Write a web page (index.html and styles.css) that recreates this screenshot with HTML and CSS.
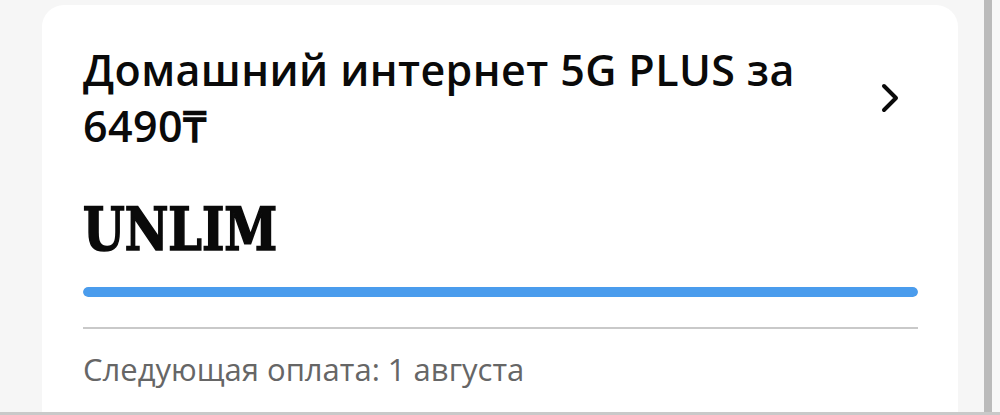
FILE: index.html
```html
<!DOCTYPE html>
<html lang="ru">
<head>
<meta charset="utf-8">
<link rel="stylesheet" href="styles.css">
</head>
<body>
<div class="screen">
  <div class="content">
    <section class="card">
      <div class="card-head">
        <h2 class="card-title">Домашний интернет 5G PLUS за 6490₸</h2>
        <svg class="chevron" width="18" height="30" viewBox="0 0 18 30">
          <path d="M3 3 L15 15 L3 27" fill="none" stroke="#0a0a0a" stroke-width="4" stroke-linecap="round" stroke-linejoin="round"/>
        </svg>
      </div>
      <div class="plan">UNLIM</div>
      <div class="bar"><div class="bar-fill" style="width:100%"></div></div>
      <div class="divider"></div>
      <div class="next-pay">Следующая оплата: 1 августа</div>
    </section>
  </div>
  <div class="scroll-track"></div>
  <div class="edge"></div>
</div>
</body>
</html>
```
FILE: styles.css
```css
* { box-sizing: border-box; }
html, body { margin: 0; padding: 0; }
body {
  width: 1000px;
  height: 415px;
  overflow: hidden;
  background: #f6f6f6;
  font-family: "Open Sans", "Liberation Sans", sans-serif;
}
.screen {
  display: flex;
  height: 415px;
  border-bottom: 3px solid #c9c9c9;
}
.content {
  width: 984px;
  padding: 5px 26px 0 42px;
}
.card {
  background: #fff;
  border-radius: 22px 22px 0 0;
  height: 100%;
  padding: 37px 40px 0 41px;
}
.card-head {
  display: flex;
  align-items: center;
  justify-content: space-between;
}
.card-title {
  margin: 0;
  width: 760px;
  font-size: 43px;
  line-height: 56px;
  font-weight: 600;
  color: #0a0a0a;
  letter-spacing: 0.4px;
}
.chevron {
  margin-right: 19px;
}
.plan {
  margin-top: 44px;
  font-family: "DejaVu Serif", serif;
  font-stretch: condensed;
  font-weight: 700;
  font-size: 59px;
  line-height: 64px;
  letter-spacing: 0;
  color: #0a0a0a;
  -webkit-text-stroke: 1.6px #0a0a0a;
  transform: scaleX(0.9);
  transform-origin: left center;
}
.bar {
  margin-top: 25px;
  height: 10px;
  border-radius: 5px;
  background: #e6e6e6;
  overflow: hidden;
}
.bar-fill {
  height: 100%;
  border-radius: 5px;
  background: #4a9ced;
}
.divider {
  margin-top: 30px;
  height: 2px;
  background: #c9c9c9;
}
.next-pay {
  margin-top: 20px;
  font-size: 31px;
  line-height: 40px;
  color: #666;
}
.scroll-track {
  width: 8px;
  background: #bbb;
}
.edge {
  flex: 1;
  background: #f8f8f8;
}
```
